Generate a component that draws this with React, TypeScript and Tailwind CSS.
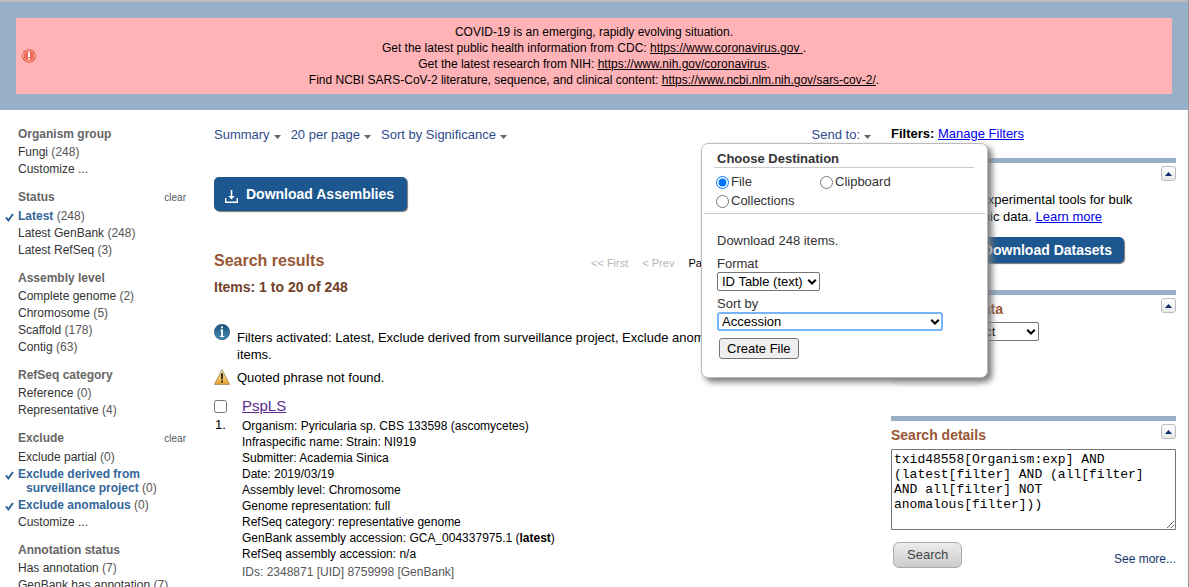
import { useState, type ReactNode } from "react";

type Item = { label: string; count?: number; on?: boolean };
type Group = { title: string; clear?: boolean; items: Item[] };

const groups: Group[] = [
  { title: "Organism group", items: [{ label: "Fungi", count: 248 }, { label: "Customize ..." }] },
  {
    title: "Status",
    clear: true,
    items: [
      { label: "Latest", count: 248, on: true },
      { label: "Latest GenBank", count: 248 },
      { label: "Latest RefSeq", count: 3 },
    ],
  },
  {
    title: "Assembly level",
    items: [
      { label: "Complete genome", count: 2 },
      { label: "Chromosome", count: 5 },
      { label: "Scaffold", count: 178 },
      { label: "Contig", count: 63 },
    ],
  },
  {
    title: "RefSeq category",
    items: [
      { label: "Reference", count: 0 },
      { label: "Representative", count: 4 },
    ],
  },
  {
    title: "Exclude",
    clear: true,
    items: [
      { label: "Exclude partial", count: 0 },
      { label: "Exclude derived from surveillance project", count: 0, on: true },
      { label: "Exclude anomalous", count: 0, on: true },
      { label: "Customize ..." },
    ],
  },
  {
    title: "Annotation status",
    items: [
      { label: "Has annotation", count: 7 },
      { label: "GenBank has annotation", count: 7 },
    ],
  },
];

function Check() {
  return (
    <svg viewBox="0 0 9 9" className="absolute top-1 left-[-13px] size-[9px]" aria-hidden="true">
      <path d="M0.9 4.4 L3.4 7.4 L8 1" fill="none" stroke="#336699" strokeWidth="2" />
    </svg>
  );
}

function FilterGroup({ group }: { group: Group }) {
  return (
    <section className="mb-[13px]">
      <div className="flex items-baseline justify-between leading-4">
        <h3 className="text-[12px] leading-4 font-bold text-[#666]">{group.title}</h3>
        {group.clear && (
          <a href="#clear" className="text-[10px] text-[#555]">
            clear
          </a>
        )}
      </div>
      <ul className="pt-[3px]">
        {group.items.map((it) => (
          <li key={it.label} className="relative mb-[3px] max-w-[160px] pl-2 -indent-2 leading-[14px] text-[#555]">
            {it.on && <Check />}
            <a href="#filter" className={it.on ? "font-bold text-[#336699]" : "text-[#333]"}>
              {it.label}
            </a>
            {it.count !== undefined && <span> ({it.count})</span>}
          </li>
        ))}
      </ul>
    </section>
  );
}

function Caret() {
  return (
    <svg viewBox="0 0 7 4" className="mt-[3px] h-1 w-[7px]" aria-hidden="true">
      <path d="M0 0H7L3.5 4Z" fill="#666" />
    </svg>
  );
}

function MenuButton({ children }: { children: ReactNode }) {
  return (
    <button type="button" className="flex items-center gap-1 leading-4 text-[#2f4a8b]">
      {children}
      <Caret />
    </button>
  );
}

function Chevron() {
  return (
    <svg viewBox="0 0 10 7" className="pointer-events-none absolute top-1/2 right-[3px] h-[7px] w-[10px] -translate-y-1/2" aria-hidden="true">
      <path d="M1.2 1.2L5 5L8.8 1.2" fill="none" stroke="#000" strokeWidth="2" />
    </svg>
  );
}

function DownloadButton({ children, size }: { children: ReactNode; size: "large" | "small" }) {
  return (
    <button
      type="button"
      className={`flex items-center gap-2 rounded-[5px] bg-[#1c578f] text-[14px] font-bold text-white shadow-[1px_1px_1px_#777] ${
        size === "large" ? "h-[34px] pr-[13px] pl-[11px]" : "h-[26px] pr-3 pl-2"
      }`}
    >
      <svg viewBox="0 0 13 13" className="mt-1 size-[13px]" aria-hidden="true">
        <path d="M0.7 8V12.2H12.3V8" fill="none" stroke="#fff" strokeWidth="1.4" />
        <path d="M5.7 0H7.3V6H9.8L6.5 9.6L3.2 6H5.7Z" fill="#fff" />
      </svg>
      {children}
    </button>
  );
}

function Portlet({ title, children }: { title: string; children: ReactNode }) {
  return (
    <section className="border-t-5 border-[#97b0c8]">
      <div className="flex items-start justify-between pt-[3px]">
        <h3 className="pt-px text-[14px] leading-5 font-bold text-[#985735]">{title}</h3>
        <button
          type="button"
          aria-label={`Collapse ${title}`}
          className="flex size-[15px] items-center justify-center rounded-[3px] border border-[#bbb] bg-linear-to-b from-white to-[#e8e8e8]"
        >
          <svg viewBox="0 0 7 4" className="h-1 w-[7px]" aria-hidden="true">
            <path d="M3.5 0L7 4H0Z" fill="#0a2f6b" />
          </svg>
        </button>
      </div>
      {children}
    </section>
  );
}

function SendToMenu() {
  const [dest, setDest] = useState("File");
  return (
    <form className="absolute top-4 right-[-117px] z-10 flex h-[235px] w-[287px] flex-col rounded-[7px] border border-[#bbb] bg-white text-[13px] text-[#333] shadow-[4px_4px_6px_#777]">
      <fieldset>
        <legend className="mr-[13px] ml-3 w-[260px] border-b border-[#ccc] pt-[7px] pl-[3px] font-bold leading-4">
          Choose Destination
        </legend>
        <div className="mx-[2px] grid grid-cols-[104px_1fr] gap-y-[3px] border-b border-[#ccc] pt-[6px] pb-1 pl-3 leading-4">
          {["File", "Clipboard", "Collections"].map((d) => (
            <label key={d} className="flex items-center gap-[2px]">
              <input
                type="radio"
                name="destination"
                className="size-[13px] accent-[#0075ff]"
                checked={dest === d}
                onChange={() => setDest(d)}
              />
              {d}
            </label>
          ))}
        </div>
      </fieldset>
      <div className="flex flex-col items-start pt-[19px] pl-[15px] leading-4">
        <p>Download 248 items.</p>
        <label htmlFor="format" className="mt-[7px]">
          Format
        </label>
        <span className="relative">
          <select
            id="format"
            className="block h-[19px] w-[103px] appearance-none rounded-[2px] border border-[#767676] bg-white pl-1 text-[13px] leading-4 text-black"
          >
            <option>ID Table (text)</option>
          </select>
          <Chevron />
        </span>
        <label htmlFor="sort" className="mt-[5px]">
          Sort by
        </label>
        <span className="relative">
          <select
            id="sort"
            className="block h-[19px] w-[226px] appearance-none rounded-[3px] border-2 border-[#76b5f8] bg-white pl-[3px] text-[13px] leading-[15px] text-black"
          >
            <option>Accession</option>
          </select>
          <Chevron />
        </span>
        <button
          type="button"
          className="mt-[7px] ml-[2px] h-[21px] rounded-[3px] border border-[#767676] bg-[#efefef] px-[7px] leading-4 text-black"
        >
          Create File
        </button>
      </div>
    </form>
  );
}

const link = "text-black underline";

export default function App() {
  const [picked, setPicked] = useState(false);
  return (
    <div className="flex h-screen flex-col overflow-hidden border-r border-[#999] bg-white font-['Liberation_Sans',Arial,sans-serif] text-[13px] text-black">
      <header className="border-t-2 border-[#bbb] bg-[#97b0c8] px-4 py-4">
        <div className="flex items-center bg-[#ffb3b7] px-[6px] py-[6px]">
          <svg viewBox="0 0 14 14" className="size-[14px]" aria-hidden="true">
            <circle cx="7" cy="7" r="6.8" fill="#d8442f" />
            <circle cx="7" cy="7" r="5.6" fill="#ee6a58" stroke="#ffc5b8" strokeWidth="0.8" />
            <path d="M6.1 2.8H7.9V8.2H6.1ZM6.1 9.2H7.9V11H6.1Z" fill="#fff" />
          </svg>
          <p className="flex-1 pr-[14px] text-center text-[12px] leading-4">
            COVID-19 is an emerging, rapidly evolving situation.
            <br />
            Get the latest public health information from CDC:{" "}
            <a href="#cdc" className={link}>https://www.coronavirus.gov </a>.
            <br />
            Get the latest research from NIH:{" "}
            <a href="#nih" className={link}>https://www.nih.gov/coronavirus</a>.
            <br />
            Find NCBI SARS-CoV-2 literature, sequence, and clinical content:{" "}
            <a href="#ncbi" className={link}>https://www.ncbi.nlm.nih.gov/sars-cov-2/</a>.
          </p>
        </div>
      </header>

      <div className="flex min-h-0 flex-1 pr-3 pl-[18px]">
        <aside className="w-[168px] shrink-0 pt-4 text-[12px]">
          {groups.map((g) => (
            <FilterGroup key={g.title} group={g} />
          ))}
        </aside>

        <main className="ml-7 min-w-0 flex-1 pt-[17px]">
          <div className="relative flex justify-between">
            <div className="flex gap-[10px]">
              <MenuButton>Summary</MenuButton>
              <MenuButton>20 per page</MenuButton>
              <MenuButton>Sort by Significance</MenuButton>
            </div>
            <MenuButton>Send to:</MenuButton>
            <SendToMenu />
          </div>

          <div className="mt-[34px] flex">
            <DownloadButton size="large">Download Assemblies</DownloadButton>
          </div>

          <div className="mt-10 flex items-center">
            <h2 className="w-[377px] text-[16px] leading-5 font-bold text-[#985735]">Search results</h2>
            <div className="flex items-center gap-[14px] pt-1 text-[11px] whitespace-nowrap text-[#b8b8b8]">
              <span>&lt;&lt; First</span>
              <span>&lt; Prev</span>
              <label className="flex items-center gap-1 text-black">
                Page
                <input defaultValue="1" className="h-4 w-8 border border-[#7fe0f0] px-1" />
              </label>
            </div>
          </div>
          <h3 className="mt-[5px] text-[14px] leading-5 font-bold text-[#724128]">Items: 1 to 20 of 248</h3>

          <div className="mt-[27px] flex gap-[7px]">
            <svg viewBox="0 0 16 16" className="size-4 shrink-0" aria-hidden="true">
              <defs>
                <linearGradient id="info" x1="0" y1="0" x2="0" y2="1">
                  <stop offset="0" stopColor="#1d5078" />
                  <stop offset="1" stopColor="#4590bc" />
                </linearGradient>
              </defs>
              <circle cx="8" cy="8" r="7.7" fill="url(#info)" stroke="#1d4f77" strokeWidth="0.6" />
              <path d="M7.1 2.4H9V4.2H7.1ZM6.4 5.6H9V11.9H9.9V13H6.2V11.9H7.1V6.7H6.4Z" fill="#fff" />
            </svg>
            <p className="pt-[5px] leading-[17px]">
              Filters activated: Latest, Exclude derived from surveillance project, Exclude anomalous. Clear all to show 252 items.
            </p>
          </div>
          <div className="mt-[6px] flex items-center gap-[7px]">
            <svg viewBox="0 0 16 16" className="size-4 shrink-0" aria-hidden="true">
              <defs>
                <linearGradient id="warn" x1="0" y1="0" x2="0" y2="1">
                  <stop offset="0" stopColor="#fff0b0" />
                  <stop offset="1" stopColor="#e8a02c" />
                </linearGradient>
              </defs>
              <path d="M8 0.7L15.6 15.4H0.4Z" fill="url(#warn)" stroke="#a08050" strokeWidth="0.8" strokeLinejoin="round" />
              <path d="M7 4.6H9L8.7 10.6H7.3ZM7.1 11.8H8.9V13.5H7.1Z" fill="#111" />
            </svg>
            <p className="leading-[17px]">Quoted phrase not found.</p>
          </div>

          <article className="mt-[11px] flex">
            <div className="w-7 shrink-0">
              <input
                type="checkbox"
                id="r1"
                checked={picked}
                onChange={() => setPicked(!picked)}
                className="mt-[3px] block size-[13px]"
              />
              <label htmlFor="r1" className="mt-1 ml-px block leading-4">1.</label>
            </div>
            <div className="text-[12px] leading-4">
              <a href="#pspls" className="mb-[3px] block text-[15px] leading-[18px] text-[#59298c] underline">
                PspLS
              </a>
              <p>Organism: Pyricularia sp. CBS 133598 (ascomycetes)</p>
              <p>Infraspecific name: Strain: NI919</p>
              <p>Submitter: Academia Sinica</p>
              <p>Date: 2019/03/19</p>
              <p>Assembly level: Chromosome</p>
              <p>Genome representation: full</p>
              <p>RefSeq category: representative genome</p>
              <p>
                GenBank assembly accession: GCA_004337975.1 (<b>latest</b>)
              </p>
              <p>RefSeq assembly accession: n/a</p>
              <p className="mt-[2px] text-[#575757]">IDs: 2348871 [UID] 8759998 [GenBank]</p>
            </div>
          </article>
        </main>

        <aside className="ml-5 w-[285px] shrink-0 pt-4">
          <p className="mb-4 leading-4">
            <b>Filters:</b>{" "}
            <a href="#manage" className="text-[#0000ee] underline">Manage Filters</a>
          </p>
          <div className="h-[132px]">
            <Portlet title="NCBI Datasets">
              <p className="mt-1 leading-[17px]">
                Use these new experimental tools for bulk download genomic data.{" "}
                <a href="#learn" className="text-[#0000ee] underline">Learn more</a>
              </p>
              <div className="mt-3 flex w-[233px] justify-end">
                <DownloadButton size="small">Download Datasets</DownloadButton>
              </div>
            </Portlet>
          </div>
          <div className="h-[126px]">
            <Portlet title="Find related data">
              <div className="mt-[3px] flex items-center gap-1">
                <label htmlFor="db">Database:</label>
                <span className="relative">
                  <select
                    id="db"
                    className="block h-[19px] w-[85px] appearance-none rounded-[2px] border border-[#767676] bg-white pl-1 text-[13px] leading-4"
                  >
                    <option>Select</option>
                  </select>
                  <Chevron />
                </span>
              </div>
              <button type="button" disabled className="mt-[18px] h-[26px] rounded-[8px] bg-[#f4f4f4] px-4 text-[#bbb]">
                Find items
              </button>
            </Portlet>
          </div>
          <Portlet title="Search details">
            <textarea
              aria-label="Search details"
              className="mt-1 block h-[81px] w-full rounded-[1px] border border-[#767676] bg-white p-[2px] font-['Liberation_Mono',monospace] text-[13px] leading-[15px]"
              defaultValue="txid48558[Organism:exp] AND (latest[filter] AND (all[filter] AND all[filter] NOT anomalous[filter]))"
            />
            <div className="mt-3 flex items-end justify-between pl-[2px]">
              <button
                type="button"
                className="h-[26px] rounded-[6px] border border-[#aaa] bg-linear-to-b from-[#ececec] to-[#ccc] px-[13px] text-[#444]"
              >
                Search
              </button>
              <a href="#more" className="text-[12px] text-[#14376c]">See more...</a>
            </div>
          </Portlet>
        </aside>
      </div>
    </div>
  );
}
